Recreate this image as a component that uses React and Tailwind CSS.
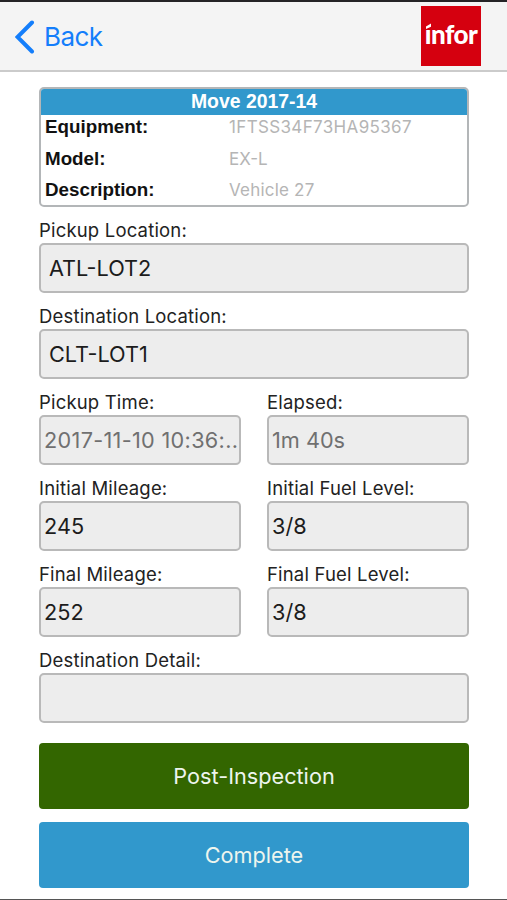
import React from 'react';

const details = [
  { label: 'Equipment:', value: '1FTSS34F73HA95367', spacing: 'tracking-[0.35px]' },
  { label: 'Model:', value: 'EX-L', spacing: '' },
  { label: 'Description:', value: 'Vehicle 27', spacing: 'tracking-[0.2px]' },
];

const Field = ({ label, value, wide, muted, spacing = '' }) => (
  <label className="block min-w-0 pt-[10px]">
    <span className="block h-[26px] text-[18.5px] leading-[26px] tracking-[0.18px] text-[#222] whitespace-nowrap">{label}</span>
    <input
      readOnly
      value={value}
      className={`block h-[50px] w-full rounded-[5px] border-2 border-[#b9b9b9] bg-[#ededed] text-[21.7px] outline-none ${spacing} ${wide ? 'px-2' : 'pl-[3px] pr-0'} ${muted ? 'text-[#707070]' : 'text-[#1c1c1c]'}`}
    />
  </label>
);

const InforLogo = () => (
  <div className="relative flex h-[60px] w-[60px] items-center justify-center bg-[#d5000f] pb-1">
    <span className="font-['Lato',sans-serif] text-[26px] leading-none font-black tracking-[-0.5px] text-white">infor</span>
    <svg className="absolute top-[16px] left-[3px]" width="8" height="9" viewBox="0 0 8 9">
      <rect width="8" height="7" fill="#d5000f" />
      <path d="M2 4.4 7 1.6v3.2L2 7z" fill="#fff" />
    </svg>
  </div>
);

const App = () => {
  return (
    <div className="flex h-[900px] w-[507px] flex-col border-t-2 border-b border-t-[#252326] border-b-[#555] bg-white font-['Inter','Liberation_Sans',sans-serif]">
      <header className="flex h-[70px] shrink-0 items-center justify-between border-b-2 border-[#cbcbcb] bg-[#f4f4f4] pr-[26px] pl-[15px]">
        <button className="flex items-center gap-[9px] pt-px text-[#147efb]">
          <svg width="20" height="34" viewBox="0 0 20 34" fill="none" stroke="currentColor" strokeWidth="4" strokeLinecap="round">
            <path d="M17 2.5 2.5 17 17 31.5" />
          </svg>
          <span className="pt-px text-[26px] leading-[32px] tracking-[-0.6px]">Back</span>
        </button>
        <InforLogo />
      </header>

      <main className="flex flex-col pt-[15px] pr-[38px] pl-[39px]">
        <section className="h-[120px] overflow-hidden rounded-[5px] border-2 border-[#b3b6b8]">
          <h1 className="h-[26px] bg-[#3198cc] text-center font-['Liberation_Sans',sans-serif] text-[19.4px] leading-[24px] font-bold text-white">
            Move 2017-14
          </h1>
          <dl>
            {details.map((item) => (
              <div key={item.label} className="flex h-[31.5px] items-start pl-1">
                <dt className="w-[184px] font-['Liberation_Sans',sans-serif] text-[18.8px] leading-[24px] font-bold text-[#111]">{item.label}</dt>
                <dd className={`text-[17px] leading-[24px] text-[#b5b5b5] ${item.spacing}`}>{item.value}</dd>
              </div>
            ))}
          </dl>
        </section>

        <Field label="Pickup Location:" value="ATL-LOT2" wide />
        <Field label="Destination Location:" value="CLT-LOT1" wide />
        <div className="grid grid-cols-2 gap-x-[26px]">
          <Field label="Pickup Time:" value="2017-11-10 10:36:.." muted spacing="tracking-[0.3px]" />
          <Field label="Elapsed:" value="1m 40s" muted />
          <Field label="Initial Mileage:" value="245" />
          <Field label="Initial Fuel Level:" value="3/8" />
          <Field label="Final Mileage:" value="252" />
          <Field label="Final Fuel Level:" value="3/8" />
        </div>
        <Field label="Destination Detail:" value="" wide />

        <div className="flex flex-col gap-[13px] pt-5 text-[21.7px] text-[#edf5ee]">
          <button className="h-[66px] rounded-[4px] bg-[#336600]">Post-Inspection</button>
          <button className="h-[66px] rounded-[4px] bg-[#3198cc]">Complete</button>
        </div>
      </main>
    </div>
  );
};

export default App;
